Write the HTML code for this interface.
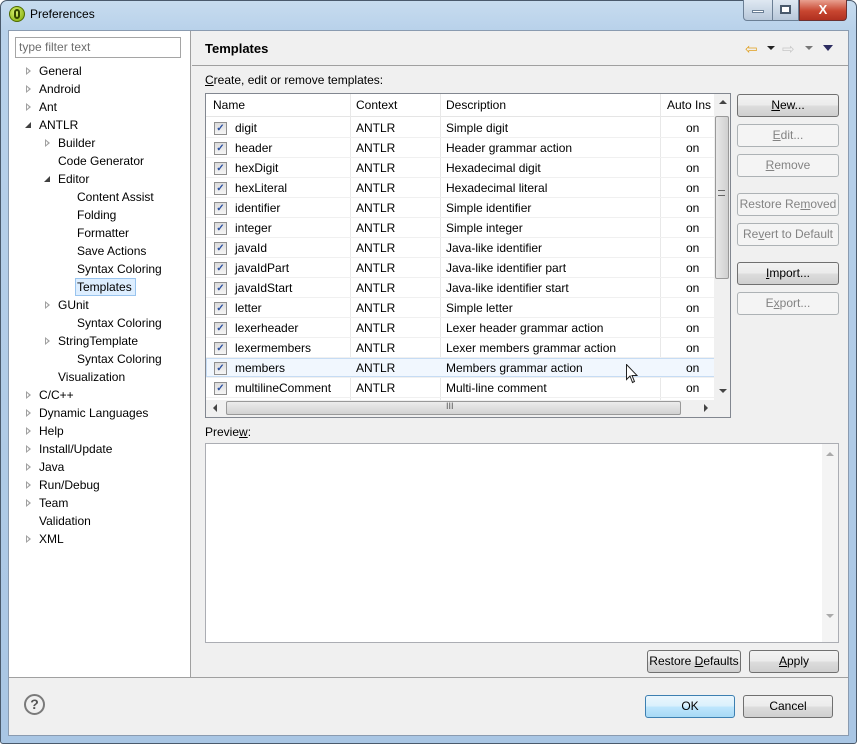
<!DOCTYPE html>
<html><head><style>
*{box-sizing:border-box;margin:0;padding:0}
body{width:857px;height:744px;overflow:hidden;background:#fff;font-family:"Liberation Sans",sans-serif;font-size:12px;color:#000;position:relative}
.a{position:absolute}
.frame{left:0;top:0;width:857px;height:744px;background:linear-gradient(180deg,#c7dcef 0,#b8d1ea 30px,#a9c6e4 100%);border:1px solid #4a5a6c;border-radius:7px 7px 3px 3px}
.client{left:8px;top:30px;width:841px;height:706px;background:#f0f0f0;border:1px solid #8a9bb0}
.btn{position:absolute;height:23px;border:1px solid #707070;border-radius:3px;background:linear-gradient(#f2f2f2 0,#ebebeb 50%,#dddddd 51%,#cfcfcf 100%);text-align:center;line-height:21px;font-size:12px}
.dis{border-color:#adb2b5;background:#f4f4f4;color:#838383}
.tree div{position:absolute;height:18px;line-height:18px;white-space:nowrap}
.tri{position:absolute;width:0;height:0;border-top:4px solid transparent;border-bottom:4px solid transparent;border-left:5px solid #a0a0a0}
.tri:after{content:"";position:absolute;left:-4px;top:-2px;border-top:2px solid transparent;border-bottom:2px solid transparent;border-left:2px solid #fff}
.open{position:absolute;width:0;height:0;border-left:6px solid transparent;border-bottom:6px solid #404040}
.row{position:absolute;left:0;width:509px;height:20px;line-height:20px;border-bottom:1px solid #f0f0f0}
.row span{position:absolute;top:0}
.cb{position:absolute;left:8px;top:4px;width:13px;height:13px;border:1px solid #8f8f8f;background:linear-gradient(#dcdcdc,#f6f6f6);color:#2a4fa0;font-size:10px;line-height:11px;text-align:center;font-weight:bold}
u{text-decoration:underline}
</style></head><body>
<div class="a frame"></div>
<div class="a" style="left:9px;top:6px;width:16px;height:16px;border-radius:50%;background:radial-gradient(circle at 40% 35%,#d8f070,#7aa600);border:1px solid #4f6b00"></div>
<div class="a" style="left:14px;top:9px;width:6px;height:10px;border:2px solid #334400;border-radius:3px"></div>
<div class="a" style="left:30px;top:7px;font-size:12px">Preferences</div>
<div class="a" style="left:743px;top:0;width:30px;height:21px;border:1px solid #6b7f95;border-top:none;border-radius:0 0 0 4px;background:linear-gradient(#dfe8f2,#b8c8da)"></div>
<div class="a" style="left:752px;top:10px;width:12px;height:3px;background:#fff;border:1px solid #6b7f95"></div>
<div class="a" style="left:773px;top:0;width:26px;height:21px;border:1px solid #6b7f95;border-top:none;border-left:none;background:linear-gradient(#dfe8f2,#b8c8da)"></div>
<div class="a" style="left:780px;top:5px;width:11px;height:9px;border:2px solid #4a5a6c;background:#fff"></div>
<div class="a" style="left:799px;top:0;width:48px;height:21px;border:1px solid #6b3030;border-top:none;border-radius:0 0 4px 0;background:linear-gradient(#e8a090,#c84630 55%,#b03020);color:#fff;font-weight:bold;text-align:center;line-height:19px;font-size:13px">X</div>
<div class="a client"></div>
<div class="a" style="left:9px;top:31px;width:182px;height:646px;background:#fff;border-right:1px solid #a0a0a0"></div>
<div class="a" style="left:15px;top:37px;width:166px;height:21px;border:1px solid #a5a5a5;background:#fff;color:#6d6d6d;line-height:19px;padding-left:3px">type filter text</div>
<div class="tree">
<div style="left:39px;top:62px">General</div><div style="left:39px;top:80px">Android</div><div style="left:39px;top:98px">Ant</div><div style="left:39px;top:116px">ANTLR</div>
<div style="left:58px;top:134px">Builder</div><div style="left:58px;top:152px">Code Generator</div><div style="left:58px;top:170px">Editor</div>
<div style="left:77px;top:188px">Content Assist</div><div style="left:77px;top:206px">Folding</div><div style="left:77px;top:224px">Formatter</div><div style="left:77px;top:242px">Save Actions</div><div style="left:77px;top:260px">Syntax Coloring</div>
<div style="left:75px;top:278px;width:61px;background:#ddeeff;border:1px solid #99c4ee;padding-left:1px;line-height:16px">Templates</div>
<div style="left:58px;top:296px">GUnit</div><div style="left:77px;top:314px">Syntax Coloring</div><div style="left:58px;top:332px">StringTemplate</div><div style="left:77px;top:350px">Syntax Coloring</div><div style="left:58px;top:368px">Visualization</div>
<div style="left:39px;top:386px">C/C++</div><div style="left:39px;top:404px">Dynamic Languages</div><div style="left:39px;top:422px">Help</div><div style="left:39px;top:440px">Install/Update</div><div style="left:39px;top:458px">Java</div><div style="left:39px;top:476px">Run/Debug</div><div style="left:39px;top:494px">Team</div><div style="left:39px;top:512px">Validation</div><div style="left:39px;top:530px">XML</div>
</div>
<div class="tri" style="left:26px;top:67px"></div><div class="tri" style="left:26px;top:85px"></div><div class="tri" style="left:26px;top:103px"></div>
<div class="open" style="left:25px;top:122px"></div>
<div class="tri" style="left:45px;top:139px"></div><div class="open" style="left:44px;top:176px"></div>
<div class="tri" style="left:45px;top:301px"></div><div class="tri" style="left:45px;top:337px"></div>
<div class="tri" style="left:26px;top:391px"></div><div class="tri" style="left:26px;top:409px"></div><div class="tri" style="left:26px;top:427px"></div><div class="tri" style="left:26px;top:445px"></div><div class="tri" style="left:26px;top:463px"></div><div class="tri" style="left:26px;top:481px"></div><div class="tri" style="left:26px;top:499px"></div><div class="tri" style="left:26px;top:535px"></div>
<div class="a" style="left:205px;top:41px;font-weight:bold;font-size:13px">Templates</div>
<div class="a" style="left:192px;top:65px;width:656px;height:1px;background:#a0a0a0"></div>
<div class="a" style="left:745px;top:40px;color:#e0a020;font-size:15px">⇦</div>
<div class="a" style="left:767px;top:46px;border-left:4px solid transparent;border-right:4px solid transparent;border-top:4px solid #222"></div>
<div class="a" style="left:782px;top:40px;color:#c8c8c8;font-size:15px">⇨</div>
<div class="a" style="left:805px;top:46px;border-left:4px solid transparent;border-right:4px solid transparent;border-top:4px solid #777"></div>
<div class="a" style="left:823px;top:45px;border-left:5px solid transparent;border-right:5px solid transparent;border-top:6px solid #2c2c60"></div>
<div class="a" style="left:205px;top:73px"><u>C</u>reate, edit or remove templates:</div>
<div class="a" style="left:205px;top:93px;width:526px;height:325px;border:1px solid #828790;background:#fff;overflow:hidden">
 <div class="a" style="left:0;top:0;width:509px;height:23px;border-bottom:1px solid #e5e5e5;line-height:23px">
  <span class="a" style="left:7px">Name</span><span class="a" style="left:150px">Context</span><span class="a" style="left:240px">Description</span><span class="a" style="left:461px">Auto Ins</span>
 </div>
 <div class="a" style="left:144px;top:0;width:1px;height:306px;background:#e8e8e8"></div>
 <div class="a" style="left:234px;top:0;width:1px;height:306px;background:#e8e8e8"></div>
 <div class="a" style="left:454px;top:0;width:1px;height:306px;background:#e8e8e8"></div>
 <div id="rows"></div>
 <div class="a" style="left:508px;top:0;width:17px;height:306px;background:#f0f0f0"></div>
 <div class="a" style="left:513px;top:6px;border-left:4px solid transparent;border-right:4px solid transparent;border-bottom:4px solid #444"></div>
 <div class="a" style="left:509px;top:22px;width:14px;height:163px;border:1px solid #999;border-radius:2px;background:linear-gradient(90deg,#e8e8e8,#d0d0d0)"></div>
 <div class="a" style="left:512px;top:96px;width:7px;height:6px;border-top:1px solid #666;border-bottom:1px solid #666"></div>
 <div class="a" style="left:513px;top:295px;border-left:4px solid transparent;border-right:4px solid transparent;border-top:4px solid #444"></div>
 <div class="a" style="left:0;top:306px;width:525px;height:17px;background:#f0f0f0"></div>
 <div class="a" style="left:7px;top:310px;border-top:4px solid transparent;border-bottom:4px solid transparent;border-right:4px solid #444"></div>
 <div class="a" style="left:20px;top:307px;width:455px;height:14px;border:1px solid #999;border-radius:2px;background:linear-gradient(#ececec,#d2d2d2)"></div>
 <div class="a" style="left:240px;top:307px;font-size:9px;color:#555">III</div>
 <div class="a" style="left:498px;top:310px;border-top:4px solid transparent;border-bottom:4px solid transparent;border-left:4px solid #444"></div>
 <div class="a" style="left:508px;top:306px;width:17px;height:17px;background:#f0f0f0"></div>
</div>
<script>
var d=[["digit","Simple digit"],["header","Header grammar action"],["hexDigit","Hexadecimal digit"],["hexLiteral","Hexadecimal literal"],["identifier","Simple identifier"],["integer","Simple integer"],["javaId","Java-like identifier"],["javaIdPart","Java-like identifier part"],["javaIdStart","Java-like identifier start"],["letter","Simple letter"],["lexerheader","Lexer header grammar action"],["lexermembers","Lexer members grammar action"],["members","Members grammar action"],["multilineComment","Multi-line comment"]];
var h="";d.forEach(function(r,i){var hl=i==12?"background:#f1f7fe;box-shadow:inset 0 0 0 1px #c6dcf4;":"";h+='<div class="row" style="top:'+(24+i*20)+'px;'+hl+'"><div class="cb">✓</div><span style="left:29px">'+r[0]+'</span><span style="left:150px">ANTLR</span><span style="left:240px">'+r[1]+'</span><span style="left:480px">on</span></div>';});
document.getElementById("rows").innerHTML=h;
</script>
<svg class="a" style="left:626px;top:364px" width="12" height="20" viewBox="0 0 12 20"><path d="M0.5 0.5 L0.5 15.5 L4 12 L6.5 18.5 L8.5 17.5 L6 11.5 L11 11.5 Z" fill="#fff" stroke="#222" stroke-width="1"/></svg>
<div class="btn" style="left:737px;top:94px;width:102px"><u>N</u>ew...</div>
<div class="btn dis" style="left:737px;top:124px;width:102px"><u>E</u>dit...</div>
<div class="btn dis" style="left:737px;top:154px;width:102px"><u>R</u>emove</div>
<div class="btn dis" style="left:737px;top:193px;width:102px">Restore Re<u>m</u>oved</div>
<div class="btn dis" style="left:737px;top:223px;width:102px">Re<u>v</u>ert to Default</div>
<div class="btn" style="left:737px;top:262px;width:102px"><u>I</u>mport...</div>
<div class="btn dis" style="left:737px;top:292px;width:102px">E<u>x</u>port...</div>
<div class="a" style="left:205px;top:425px">Previe<u>w</u>:</div>
<div class="a" style="left:205px;top:443px;width:634px;height:200px;border:1px solid #abadb3;background:#fff"></div>
<div class="a" style="left:822px;top:444px;width:16px;height:198px;background:#f4f4f4"></div>
<div class="a" style="left:826px;top:452px;border-left:4px solid transparent;border-right:4px solid transparent;border-bottom:4px solid #aaa"></div>
<div class="a" style="left:826px;top:614px;border-left:4px solid transparent;border-right:4px solid transparent;border-top:4px solid #aaa"></div>
<div class="btn" style="left:647px;top:650px;width:94px">Restore <u>D</u>efaults</div>
<div class="btn" style="left:749px;top:650px;width:90px"><u>A</u>pply</div>
<div class="a" style="left:9px;top:677px;width:839px;height:1px;background:#a0a0a0"></div>
<div class="a" style="left:24px;top:694px;width:21px;height:21px;border:2px solid #7a7a7a;border-radius:50%;text-align:center;line-height:17px;font-weight:bold;font-size:14px;color:#555">?</div>
<div class="btn" style="left:645px;top:695px;width:90px;border-color:#3c7fb1;background:linear-gradient(#eaf6fd,#d9f0fc 50%,#bee6fd 51%,#a7d9f5)">OK</div>
<div class="btn" style="left:743px;top:695px;width:90px">Cancel</div>
</body></html>
